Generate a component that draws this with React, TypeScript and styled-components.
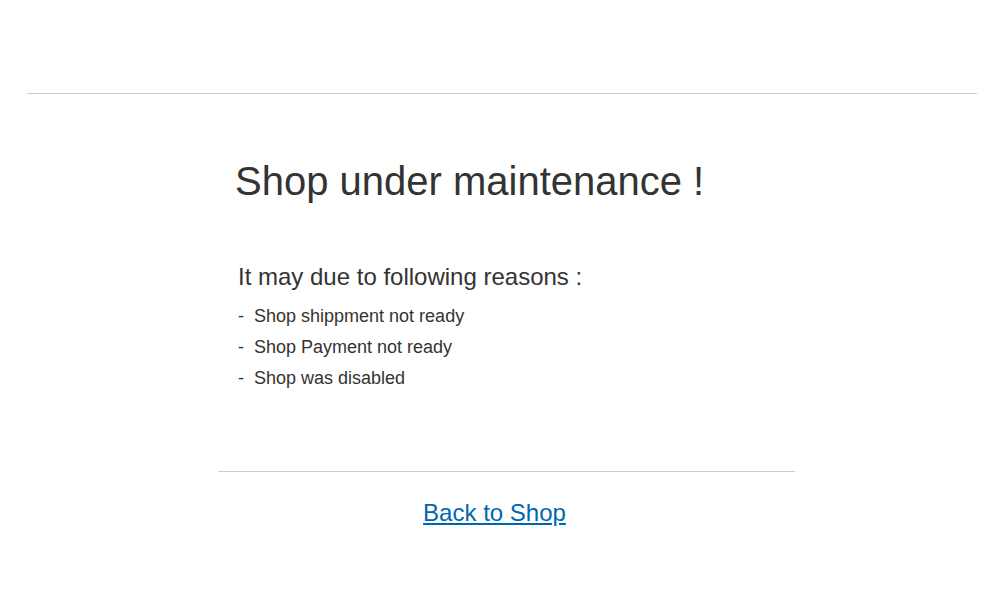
import React from "react";
import styled, { createGlobalStyle } from "styled-components";

const Global = createGlobalStyle`
  html, body { margin: 0; padding: 0; background: #ffffff; }
  body { font-family: "Liberation Sans", Arial, sans-serif; color: #333333; }
`;

const Page = styled.div`
  width: 1000px;
  height: 600px;
  display: flex;
  flex-direction: column;
`;

const TopRule = styled.div`
  margin: 93px 23px 0 27px;
  border-top: 1px solid #cccccc;
`;

const Content = styled.main`
  width: 577px;
  margin: 0 0 0 218px;
  display: flex;
  flex-direction: column;
`;

const Title = styled.h1`
  margin: 62px 0 0 17px;
  font-size: 40px;
  font-weight: 400;
  line-height: 50px;
  color: #333333;
`;

const Subtitle = styled.h2`
  margin: 56px 0 0 20px;
  font-size: 24px;
  font-weight: 400;
  line-height: 30px;
  color: #333333;
`;

const Reasons = styled.ul`
  list-style: none;
  margin: 9px 0 0 20px;
  padding: 0;
  display: flex;
  flex-direction: column;
`;

const Reason = styled.li`
  display: flex;
  font-size: 18px;
  line-height: 31px;
  color: #333333;
`;

const Dash = styled.span`
  width: 16px;
`;

const Divider = styled.div`
  margin-top: 77px;
  border-top: 1px solid #cccccc;
`;

const Footer = styled.div`
  margin-top: 26px;
  display: flex;
  justify-content: center;
  padding-right: 24px;
`;

const BackLink = styled.a`
  font-size: 24px;
  line-height: 30px;
  color: #0066b2;
  text-decoration: underline;
`;

export default function App() {
  const reasons = ["Shop shippment not ready", "Shop Payment not ready", "Shop was disabled"];
  return (
    <Page>
      <Global />
      <TopRule />
      <Content>
        <Title>Shop under maintenance !</Title>
        <Subtitle>It may due to following reasons :</Subtitle>
        <Reasons>
          {reasons.map((r) => (
            <Reason key={r}>
              <Dash>-</Dash>
              {r}
            </Reason>
          ))}
        </Reasons>
        <Divider />
        <Footer>
          <BackLink href="#">Back to Shop</BackLink>
        </Footer>
      </Content>
    </Page>
  );
}
